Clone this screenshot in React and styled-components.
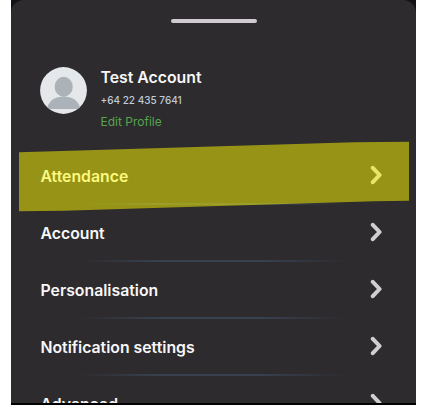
import React from "react";
import styled, { createGlobalStyle } from "styled-components";

const GlobalStyle = createGlobalStyle`
  * { box-sizing: border-box; }
  body { margin: 0; background: #fff; font-family: Inter, "Liberation Sans", sans-serif; }
`;

const Screen = styled.main`
  width: 405px;
  height: 405px;
  margin-left: 11px;
  background: #141216;
  overflow: hidden;
`;

const Sheet = styled.section`
  height: 403px;
  overflow: hidden;
  background: #2d2b2d;
  border-radius: 13px 13px 0 0;
  display: flex;
  flex-direction: column;
`;

const BottomEdge = styled.div`
  height: 2px;
  background: #000;
`;

const Handle = styled.div`
  flex: none;
  align-self: center;
  width: 86px;
  height: 4px;
  margin: 19px 0 0;
  border-radius: 2px;
  background: #cfcbd0;
`;

const Profile = styled.header`
  flex: none;
  display: flex;
  gap: 13.5px;
  height: 81px;
  margin-top: 44px;
  padding-left: 29px;
`;

const Avatar = styled.svg`
  flex: none;
  width: 47px;
  height: 47px;
`;

const Details = styled.div`
  display: flex;
  flex-direction: column;
  align-items: flex-start;
`;

const Name = styled.div`
  height: 23px;
  font-size: 15.8px;
  font-weight: 600;
  line-height: 22px;
  color: #f8f7f8;
`;

const Phone = styled.div`
  height: 21px;
  font-size: 10px;
  font-weight: 500;
  line-height: 21px;
  color: #bdcbdc;
`;

const EditLink = styled.a`
  font-size: 12px;
  line-height: 21px;
  color: #55a44e;
`;

const Menu = styled.nav`
  position: relative;
  flex: none;
`;

const Row = styled.div`
  display: flex;
  align-items: center;
  justify-content: space-between;
  height: 57px;
  padding: 0 33px 0 29.5px;
  font-size: 15.8px;
  line-height: 20px;
  font-weight: 600;
  color: #f8f7f8;
  background: linear-gradient(90deg, transparent, #374150 30%, #374150 68%, transparent)
    68px 100% / 268px 2px no-repeat;
`;

const Chevron = styled.svg`
  width: 13px;
  height: 20px;
  margin-bottom: 3px;
  fill: none;
  stroke: #d0ced0;
  stroke-width: 4;
  stroke-linecap: round;
  stroke-linejoin: round;
`;

const Highlight = styled.svg`
  position: absolute;
  left: 8px;
  top: -7px;
  width: 390px;
  height: 71px;
  fill: #fffb00;
  fill-opacity: 0.5;
  pointer-events: none;
`;

const items = ["Attendance", "Account", "Personalisation", "Notification settings", "Advanced"];

export default function App() {
  return (
    <>
      <GlobalStyle />
      <Screen>
        <Sheet>
          <Handle />
          <Profile>
            <Avatar viewBox="0 0 47 47">
              <circle cx="23.5" cy="23.5" r="23.4" fill="#e5e8ea" />
              <ellipse cx="23.7" cy="19.8" rx="9.1" ry="10" fill="#acb3b8" />
              <path d="M7.3 40.2C10 33 15.5 29.6 23.7 29.6S37.3 33 40 40.2C38.8 41.4 37.8 42 37.8 42H9.5S8.2 41.2 7.3 40.2Z" fill="#acb3b8" />
            </Avatar>
            <Details>
              <Name>Test Account</Name>
              <Phone>+64 22 435 7641</Phone>
              <EditLink>Edit Profile</EditLink>
            </Details>
          </Profile>
          <Menu>
            {items.map((label) => (
              <Row key={label}>
                {label}
                <Chevron viewBox="0 0 13 20">
                  <path d="M2.8 2.8L9.6 10L2.8 17.2" />
                </Chevron>
              </Row>
            ))}
            <Highlight viewBox="0 0 390 71">
              <path d="M0 11.3L26 10.6L335 1.3L390 .8V59.8L355 60.3L45 69.8L0 70.3Z" />
            </Highlight>
          </Menu>
        </Sheet>
        <BottomEdge />
      </Screen>
    </>
  );
}
